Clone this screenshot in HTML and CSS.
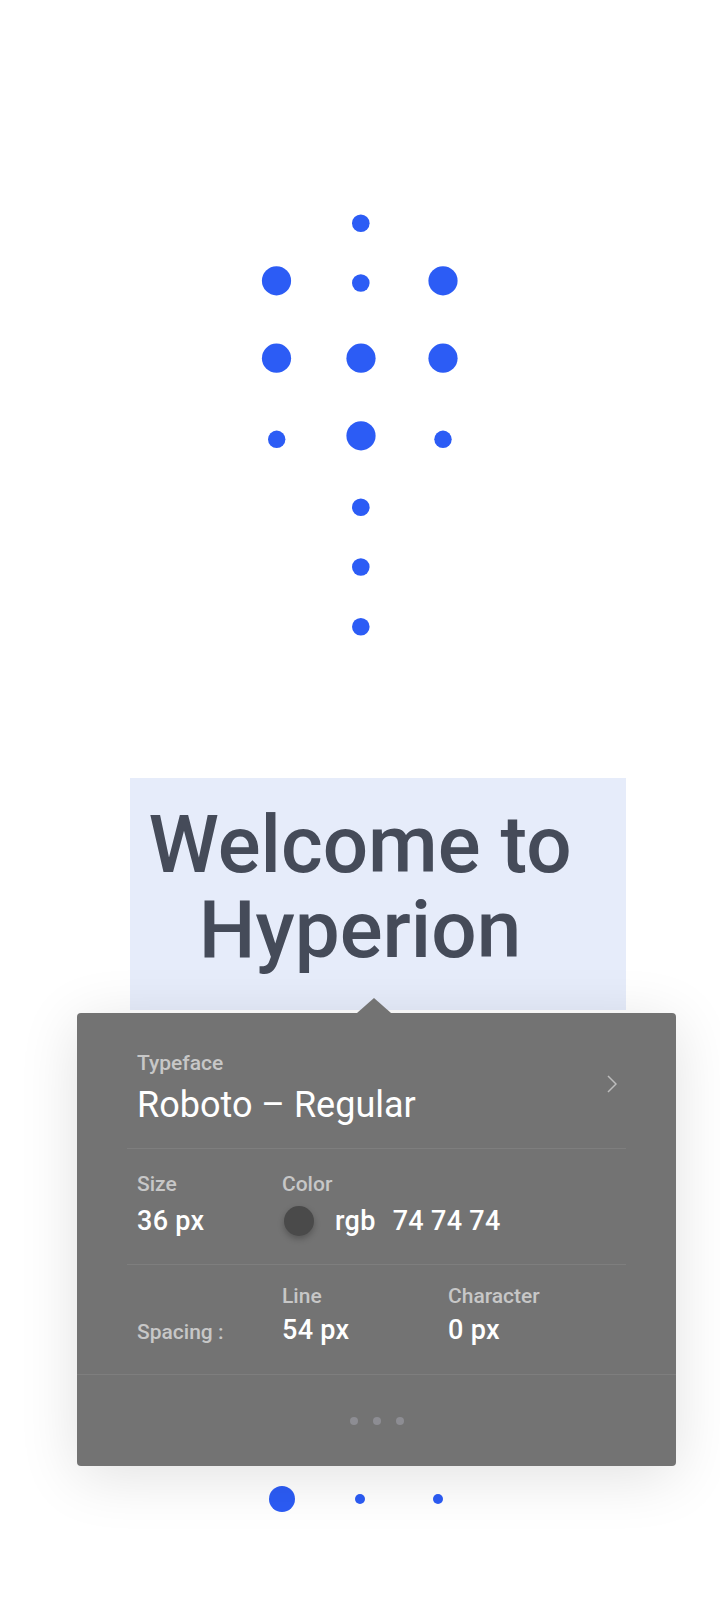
FILE: index.html
```html
<!DOCTYPE html>
<html lang="en">
<head>
    <meta charset="UTF-8">
    <meta name="viewport" content="width=device-width, initial-scale=1.0">
    <title>Hyperion - Text inspector</title>
    <link rel="stylesheet" href="styles.css">
</head>
<body>
    <div class="page">
        <!-- logo mark -->
        <svg class="logo" width="220" height="440" viewBox="0 0 220 440">
            <g fill="#2c5cf5">
                <circle cx="110.8" cy="18.3" r="8.8"/>
                <circle cx="26.5" cy="75.8" r="14.6"/>
                <circle cx="110.8" cy="78" r="8.8"/>
                <circle cx="193" cy="75.8" r="14.6"/>
                <circle cx="26.5" cy="153.2" r="14.6"/>
                <circle cx="111" cy="153.2" r="14.6"/>
                <circle cx="193" cy="153.2" r="14.6"/>
                <circle cx="26.7" cy="234.3" r="8.7"/>
                <circle cx="111" cy="230.8" r="14.6"/>
                <circle cx="193" cy="234.3" r="8.7"/>
                <circle cx="110.8" cy="302.3" r="8.8"/>
                <circle cx="110.8" cy="362" r="8.8"/>
                <circle cx="110.8" cy="421.7" r="8.8"/>
            </g>
        </svg>

        <div class="sample">
            <h1 class="sample-text">Welcome to<br>Hyperion</h1>
        </div>

        <div class="inspector">
            <div class="section typeface">
                <div>
                    <div class="label">Typeface</div>
                    <div class="typeface-name">Roboto – Regular</div>
                </div>
                <svg class="chevron" width="10" height="18" viewBox="0 0 10 18">
                    <path d="M1 1l8 8-8 8" fill="none" stroke="#bdbdbd" stroke-width="1.5"/>
                </svg>
            </div>

            <div class="section props">
                <div class="label">Size</div>
                <div class="label">Color</div>
                <div class="value">36 px</div>
                <div class="value color-value">
                    <span class="swatch"></span>rgb<span class="rgb">74 74 74</span>
                </div>
            </div>

            <div class="section props spacing">
                <div></div>
                <div class="label">Line</div>
                <div class="label">Character</div>
                <div class="label">Spacing :</div>
                <div class="value">54 px</div>
                <div class="value">0 px</div>
            </div>

            <div class="more">
                <span></span>
                <span></span>
                <span></span>
            </div>
        </div>

        <div class="pager">
            <span class="pager-dot active"></span>
            <span class="pager-dot"></span>
            <span class="pager-dot"></span>
        </div>
    </div>
</body>
</html>
```

FILE: styles.css
```css
* {
    box-sizing: border-box;
}
body {
    margin: 0;
    background-color: #fff;
    font-family: Roboto, "Noto Sans", sans-serif;
}
.page {
    padding: 205px 0 80px;
}
.logo {
    display: block;
    margin: 0 auto;
}

/* text sample */
.sample {
    width: 496px;
    margin: 133px 0 0 130px;
    padding: 25px 36px 37px 0;
    background-color: #e6ecfa;
}
.sample-text {
    margin: 0;
    font-size: 80px;
    line-height: 85px;
    font-weight: 500;
    color: #454b59;
    text-align: center;
}

/* inspector popup */
.inspector {
    position: relative;
    width: 599px;
    margin: 3px 0 0 77px;
    background-color: #737373;
    border-radius: 4px;
    box-shadow: 0 10px 60px rgba(0, 0, 0, 0.12);
}
.inspector::before {
    content: '';
    position: absolute;
    top: -15px;
    left: 280px;
    width: 34px;
    height: 15px;
    background-color: #737373;
    clip-path: polygon(50% 0, 100% 100%, 0 100%);
}
.section {
    margin: 0 50px;
    padding-left: 10px;
    border-bottom: 1px solid rgba(255, 255, 255, 0.08);
}
.label {
    font-size: 21px;
    line-height: 24px;
    font-weight: 500;
    color: #c7c7c7;
}
.value {
    font-size: 27px;
    line-height: 32px;
    font-weight: 500;
    letter-spacing: 0.3px;
    color: #fff;
}
.typeface {
    display: flex;
    align-items: center;
    justify-content: space-between;
    padding: 38px 9px 23px 10px;
}
.typeface-name {
    margin-top: 10px;
    font-size: 36px;
    line-height: 40px;
    color: #fff;
}
.chevron {
    margin-bottom: 8px;
}
.props {
    display: grid;
    grid-template-columns: 145px 1fr;
    row-gap: 9px;
    padding: 23px 0 27px 10px;
}
.color-value {
    display: flex;
    align-items: center;
}
.swatch {
    width: 30px;
    height: 30px;
    margin: 0 21px 0 2px;
    border-radius: 50%;
    background-color: #4a4a4a;
    box-shadow: 0 3px 6px rgba(0, 0, 0, 0.25);
}
.rgb {
    margin-left: 17px;
}
.spacing {
    grid-template-columns: 145px 166px 1fr;
    row-gap: 6px;
    align-items: baseline;
    padding: 19px 0 28px 10px;
    border-bottom: none;
}
.more {
    display: flex;
    align-items: center;
    justify-content: center;
    gap: 15px;
    height: 92px;
    border-top: 1px solid rgba(255, 255, 255, 0.08);
}
.more span {
    width: 8px;
    height: 8px;
    border-radius: 50%;
    background-color: #8d8d93;
}

/* pager */
.pager {
    display: grid;
    grid-template-columns: repeat(3, 78px);
    justify-content: center;
    justify-items: center;
    align-items: center;
    height: 26px;
    margin-top: 20px;
}
.pager-dot {
    width: 10px;
    height: 10px;
    border-radius: 50%;
    background-color: #2c5cf5;
}
.pager-dot.active {
    width: 26px;
    height: 26px;
}
```
